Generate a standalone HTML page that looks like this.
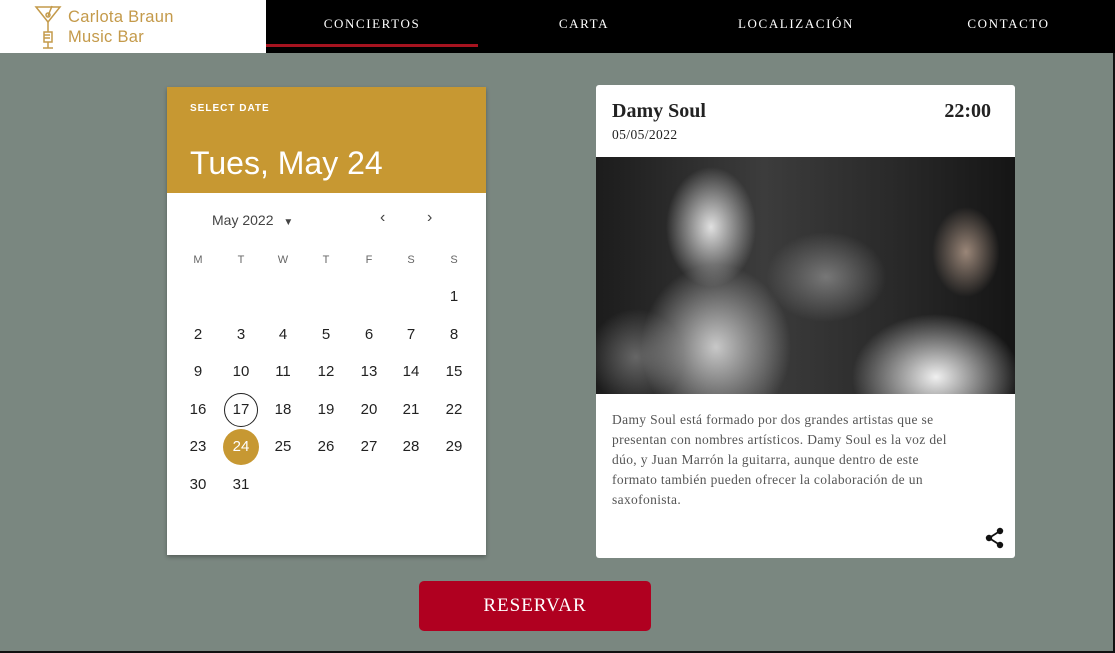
<!DOCTYPE html>
<html><head><meta charset="utf-8"><style>
*{margin:0;padding:0;box-sizing:border-box}
body{width:1115px;height:653px;background:#7a8780;position:relative;overflow:hidden;font-family:"Liberation Sans",sans-serif}
.top{position:absolute;left:0;top:0;width:1115px;height:53px;background:#000}
.logo{position:absolute;left:0;top:0;width:266px;height:53px;background:#fff}
.logo .t{position:absolute;left:68px;top:7px;color:#c49a4a;font-size:16.5px;line-height:20px;font-family:"Liberation Sans",sans-serif;letter-spacing:.3px}
.nav{position:absolute;top:16px;color:#fff;font-family:"Liberation Serif",serif;font-size:13px;letter-spacing:1.6px;text-align:center}
.ul{position:absolute;left:266px;top:44px;width:212px;height:3px;background:#a6131f}
.rb{position:absolute;right:0;top:53px;width:2px;height:600px;background:#111}
.bb{position:absolute;left:0;bottom:0;width:1115px;height:2px;background:#111}
.cal{position:absolute;left:167px;top:87px;width:319px;height:468px;background:#fff;box-shadow:0 2px 4px rgba(0,0,0,.3)}
.hd{height:106px;background:#c79832;color:#fff;position:relative}
.hd .s{position:absolute;left:23px;top:16px;font-size:10px;letter-spacing:1px;font-weight:bold}
.hd .d{position:absolute;left:23px;top:58px;font-size:32px}
.mo{position:absolute;left:45px;top:125px;font-size:14px;color:#444}
.g{position:absolute;color:#222;font-size:15px;text-align:center;width:36px;height:36px;line-height:36px}
.w{position:absolute;font-size:11px;color:#666;width:36px;text-align:center;top:167px}
.card{position:absolute;left:596px;top:85px;width:419px;height:473px;background:#fff;border-radius:3px;overflow:hidden}
.ph{position:absolute;left:0;top:72px;width:419px;height:237px;background:
radial-gradient(ellipse 60px 80px at 115px 70px,#e0e0e0,transparent 75%),
radial-gradient(ellipse 100px 110px at 120px 190px,#c8c8c8,transparent 75%),
radial-gradient(ellipse 80px 60px at 230px 120px,#777,transparent 75%),
radial-gradient(ellipse 45px 60px at 370px 95px,#9a8678,transparent 75%),
radial-gradient(ellipse 120px 90px at 340px 220px,#f0f0f0,transparent 70%),
radial-gradient(ellipse 60px 60px at 40px 200px,#666,transparent 80%),
linear-gradient(90deg,#1c1c1c,#3c3c3c 40%,#2a2a2a 70%,#151515)}
.sf{font-family:"Liberation Serif",serif}
.btn{position:absolute;left:419px;top:581px;width:232px;height:50px;background:#b00020;border-radius:5px;color:#fff;font-family:"Liberation Serif",serif;font-size:19px;letter-spacing:1px;text-align:center;line-height:50px}
</style></head><body>
<div class="top"></div>
<div class="logo">
<svg style="position:absolute;left:34px;top:4px" width="28" height="46" viewBox="0 0 28 46" fill="none" stroke="#c49a4a" stroke-width="1.5"><path d="M2 3h24L14 18z"/><path d="M14 18v10M18 2l-4 10"/><circle cx="14" cy="11" r="2"/><path d="M10 28h8v10h-8zM10 31h6M10 34h6M14 38v6M9 44h10"/></svg>
<div class="t">Carlota Braun<br>Music Bar</div></div>
<div class="nav" style="left:266px;width:212px">CONCIERTOS</div>
<div class="nav" style="left:478px;width:212px">CARTA</div>
<div class="nav" style="left:690px;width:212px">LOCALIZACIÓN</div>
<div class="nav" style="left:902px;width:213px">CONTACTO</div>
<div class="ul"></div>
<div class="cal">
<div class="hd"><div class="s">SELECT DATE</div><div class="d">Tues, May 24</div></div>
<div class="mo">May 2022 <span style="font-size:10px;margin-left:6px">▼</span></div>
<div style="position:absolute;left:213px;top:122px;font-size:16px;color:#444">‹</div>
<div style="position:absolute;left:260px;top:122px;font-size:16px;color:#444">›</div>
<div class="w" style="left:13px">M</div><div class="w" style="left:56px">T</div><div class="w" style="left:98px">W</div><div class="w" style="left:141px">T</div><div class="w" style="left:184px">F</div><div class="w" style="left:226px">S</div><div class="w" style="left:269px">S</div>
<div class="g" style="left:269px;top:192px">1</div>
<div class="g" style="left:13px;top:230px">2</div><div class="g" style="left:56px;top:230px">3</div><div class="g" style="left:98px;top:230px">4</div><div class="g" style="left:141px;top:230px">5</div><div class="g" style="left:184px;top:230px">6</div><div class="g" style="left:226px;top:230px">7</div><div class="g" style="left:269px;top:230px">8</div>
<div class="g" style="left:13px;top:267px">9</div><div class="g" style="left:56px;top:267px">10</div><div class="g" style="left:98px;top:267px">11</div><div class="g" style="left:141px;top:267px">12</div><div class="g" style="left:184px;top:267px">13</div><div class="g" style="left:226px;top:267px">14</div><div class="g" style="left:269px;top:267px">15</div>
<div class="g" style="left:13px;top:305px">16</div><div class="g" style="left:56px;top:305px;border:1px solid #222;border-radius:50%;width:34px;height:34px;line-height:32px;margin:1px">17</div><div class="g" style="left:98px;top:305px">18</div><div class="g" style="left:141px;top:305px">19</div><div class="g" style="left:184px;top:305px">20</div><div class="g" style="left:226px;top:305px">21</div><div class="g" style="left:269px;top:305px">22</div>
<div class="g" style="left:13px;top:342px">23</div><div class="g" style="left:56px;top:342px;background:#c79832;color:#fff;border-radius:50%">24</div><div class="g" style="left:98px;top:342px">25</div><div class="g" style="left:141px;top:342px">26</div><div class="g" style="left:184px;top:342px">27</div><div class="g" style="left:226px;top:342px">28</div><div class="g" style="left:269px;top:342px">29</div>
<div class="g" style="left:13px;top:380px">30</div><div class="g" style="left:56px;top:380px">31</div>
</div>
<div class="card">
<div class="sf" style="position:absolute;left:16px;top:15px;font-size:20px;font-weight:bold;color:#222">Damy Soul</div>
<div class="sf" style="position:absolute;right:24px;top:15px;font-size:20px;font-weight:bold;color:#222">22:00</div>
<div class="sf" style="position:absolute;left:16px;top:42px;font-size:13.5px;letter-spacing:.4px;color:#222">05/05/2022</div>
<div class="ph"></div>
<div class="sf" style="position:absolute;left:16px;top:325px;width:354px;font-size:13.5px;letter-spacing:.35px;line-height:20px;color:#555">Damy Soul está formado por dos grandes artistas que se presentan con nombres artísticos. Damy Soul es la voz del dúo, y Juan Marrón la guitarra, aunque dentro de este formato también pueden ofrecer la colaboración de un saxofonista.</div>
<svg style="position:absolute;left:389px;top:442px" width="20" height="22" viewBox="0 0 20 22" fill="#111"><circle cx="15" cy="4" r="3.2"/><circle cx="4" cy="11" r="3.2"/><circle cx="15" cy="18" r="3.2"/><path d="M4 11L15 4M4 11l11 7" stroke="#111" stroke-width="1.8"/></svg>
</div>
<div class="btn">RESERVAR</div>
<div class="rb"></div><div class="bb"></div>
</body></html>
